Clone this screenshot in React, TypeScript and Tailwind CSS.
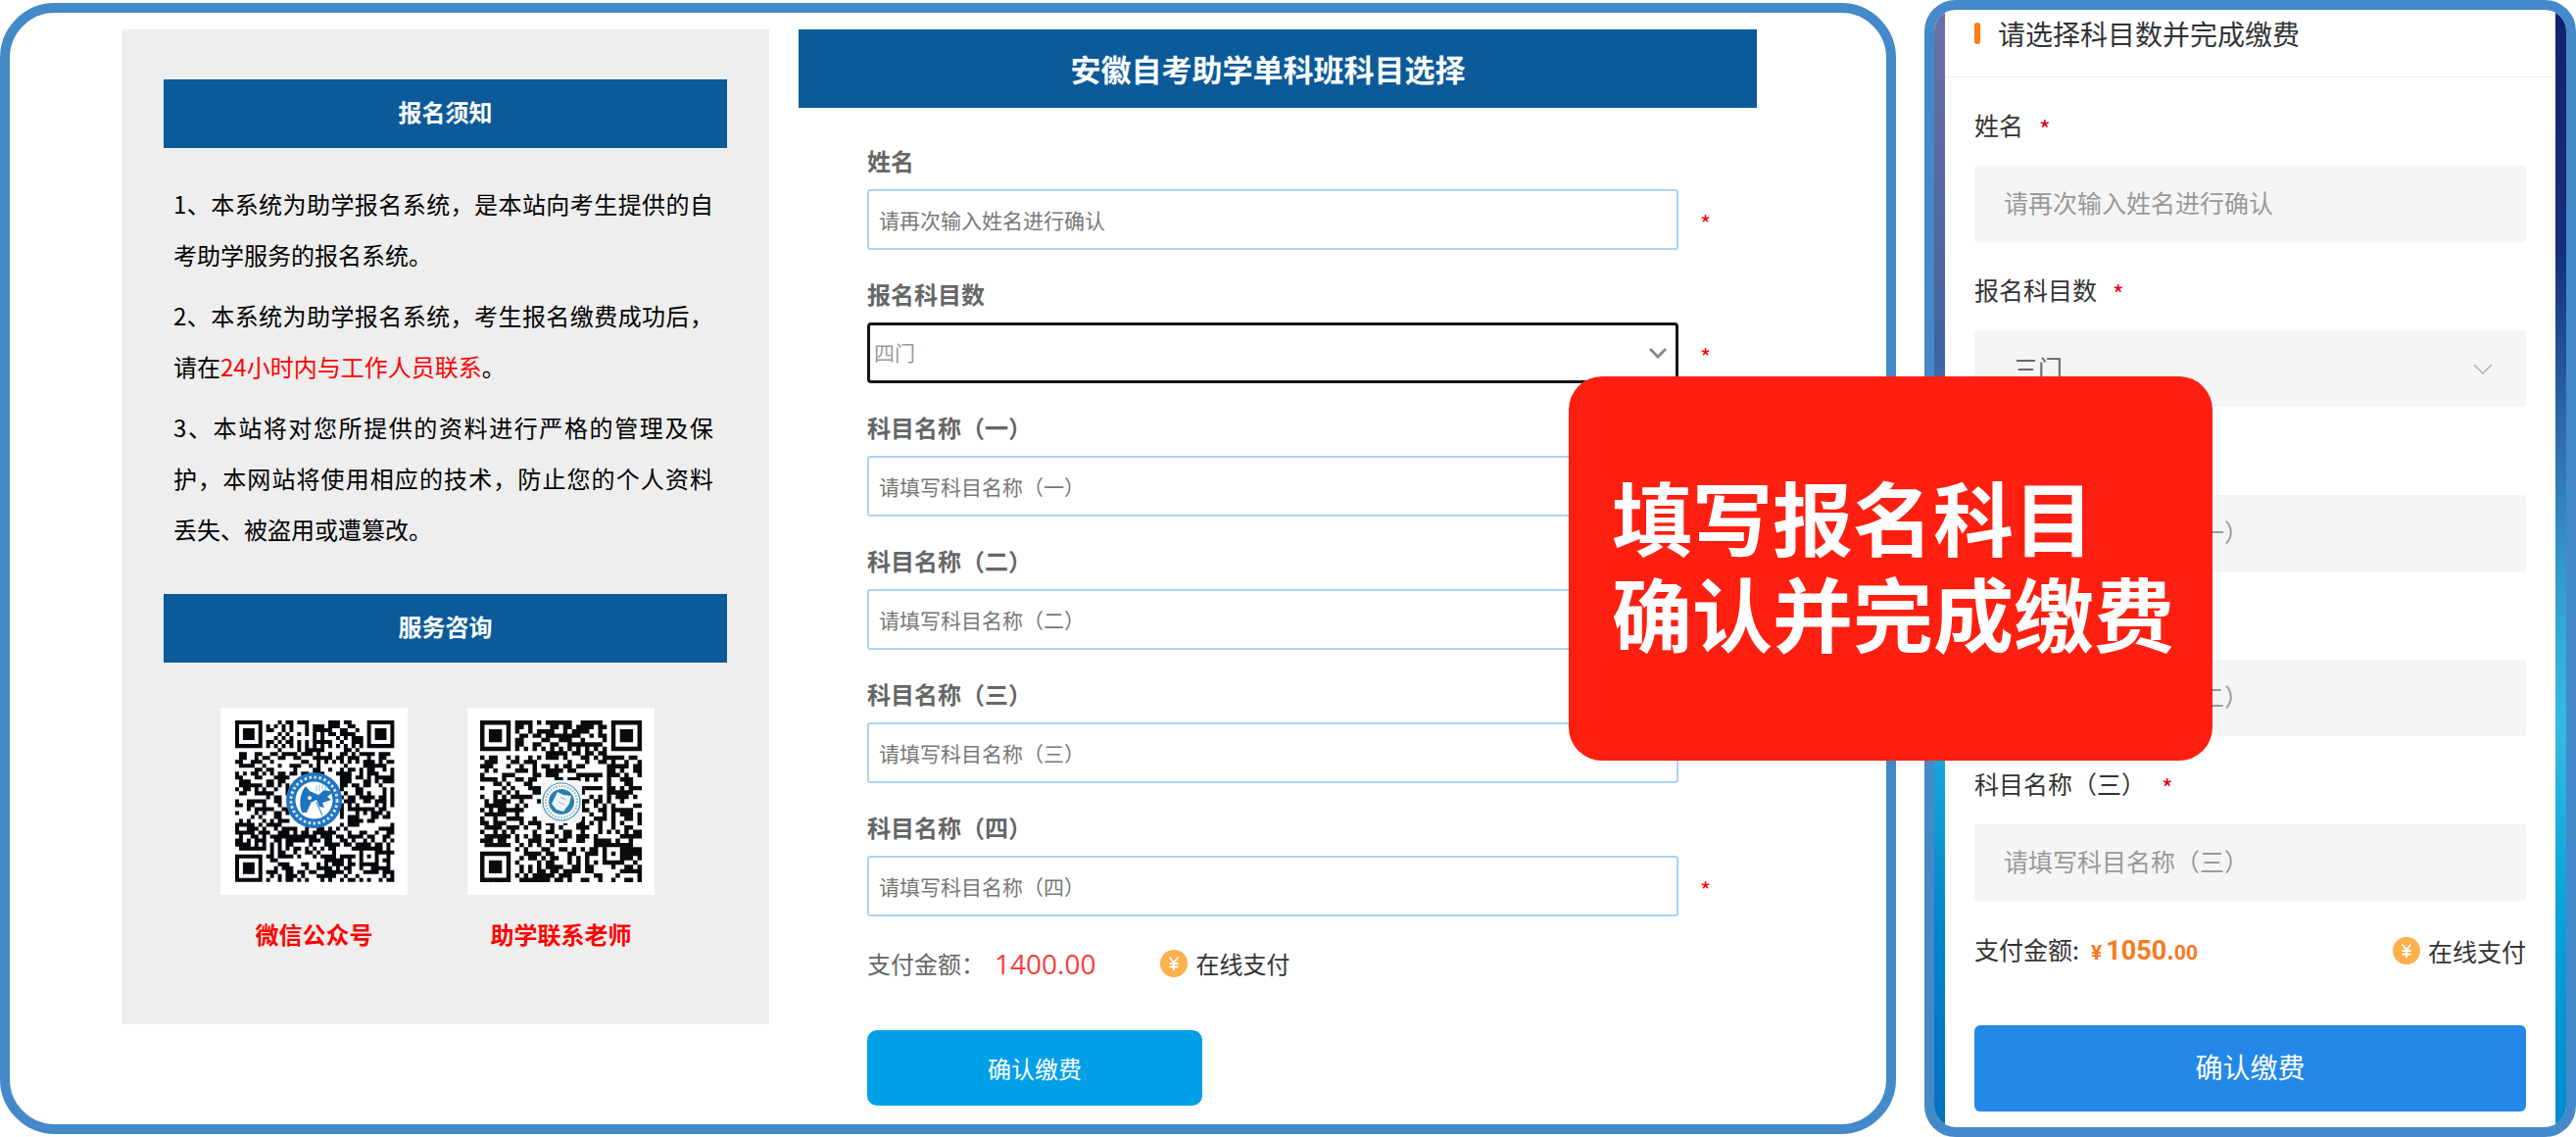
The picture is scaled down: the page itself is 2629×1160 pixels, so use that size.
import { useState } from "react";
import type { ReactNode } from "react";

const notices: ReactNode[] = [
  "1、本系统为助学报名系统，是本站向考生提供的自考助学服务的报名系统。",
  <>
    2、本系统为助学报名系统，考生报名缴费成功后，请在
    <span className="text-[#ff0000]">24小时内与工作人员联系</span>。
  </>,
  "3、本站将对您所提供的资料进行严格的管理及保护，本网站将使用相应的技术，防止您的个人资料丢失、被盗用或遭篡改。",
];

const counts = ["一门", "二门", "三门", "四门"];
const numerals = ["一", "二", "三", "四"];

// Dark modules of a QR symbol as one path, finders and alignment mark included
const qrPath = (size: number, seed: number, hole: number) => {
  let state = seed;
  const random = () => {
    state = (state * 1103515245 + 12345) % 2147483648;
    return state / 2147483648;
  };
  const corners = [
    [0, 0],
    [size - 7, 0],
    [0, size - 7],
  ];
  const mark = size - 7;
  const mid = (size - 1) / 2;
  let d = "";

  for (let y = 0; y < size; y++) {
    for (let x = 0; x < size; x++) {
      let dark = random() > 0.48;
      if (x === 6) dark = y % 2 === 0;
      if (y === 6) dark = x % 2 === 0;
      const ring = Math.max(Math.abs(x - mark), Math.abs(y - mark));
      if (ring <= 2) dark = ring !== 1;
      for (const [cx, cy] of corners) {
        const r = Math.max(Math.abs(x - cx - 3), Math.abs(y - cy - 3));
        if (r <= 4) dark = r === 3 || r <= 1;
      }
      if (Math.abs(x - mid) <= hole && Math.abs(y - mid) <= hole) dark = false;
      if (dark) d += `M${x} ${y}h1v1h-1z`;
    }
  }
  return d;
};

const wechatCode = qrPath(41, 20231, 6);
const teacherCode = qrPath(37, 7719, 4);

const WechatQr = () => (
  <svg viewBox="0 0 191 191" className="w-full bg-white" role="img" aria-label="微信公众号">
    <g transform="translate(15 13) scale(3.96 4.02)">
      <path d={wechatCode} fill="#05080d" />
    </g>
    <circle cx="95.5" cy="94.5" r="28.5" fill="#1f74c0" />
    <circle
      cx="95.5"
      cy="94.5"
      r="23.5"
      fill="none"
      stroke="#cfe3f5"
      strokeWidth="3"
      strokeDasharray="2.6 2.4"
    />
    <circle cx="95.5" cy="94.5" r="19" fill="#fff" />
    <path
      d="M83 107c-3-9-2-20 4-27l4 5 9 4 6-5 9 2-6 5 4 3-9 3 2 5-5-1-4-4-6 3-3 7z"
      fill="#1f74c0"
    />
    <path d="M92 97l6-3 2 4 4 14-8 1-5-5z" fill="#fff" />
    <path d="M98 96l6 14" stroke="#1f74c0" strokeWidth="1" />
    <path
      d="M98 85v-5M101 85v-6M104 84v-5M107 84v-4"
      stroke="#8bbbe2"
      strokeWidth="1"
      strokeLinecap="round"
    />
    <circle cx="91" cy="92" r="2" fill="#fff" />
  </svg>
);

const TeacherQr = () => (
  <svg viewBox="0 0 191 191" className="w-full bg-white" role="img" aria-label="助学联系老师">
    <g transform="translate(13 13) scale(4.46)">
      <path d={teacherCode} fill="#0c0c0c" />
    </g>
    <rect x="75" y="74" width="42" height="44" rx="5" fill="#f3f4f4" />
    <circle cx="96" cy="96" r="19" fill="#fff" stroke="#4c93b5" strokeWidth="1.2" />
    <circle
      cx="96"
      cy="96"
      r="16"
      fill="none"
      stroke="#8fbccf"
      strokeWidth="2.4"
      strokeDasharray="1.6 1.4"
    />
    <circle cx="96" cy="96" r="13" fill="#2a7fae" />
    <path d="M86 98l6-12 6 3 8 1-2 8-6 8-7-2z" fill="#eef5f8" />
    <path d="M95 91l5 3M93 96l6 3" stroke="#9aa9b5" strokeWidth="1" />
  </svg>
);

const YenIcon = () => (
  <svg viewBox="0 0 28 28" className="size-7 shrink-0" aria-hidden="true">
    <circle cx="14" cy="14" r="14" fill="#fdb04e" />
    <path
      d="M9.5 7.5L14 13l4.5-5.5M14 13v8M9.5 14h9M9.5 17.5h9"
      fill="none"
      stroke="#fff"
      strokeWidth="1.8"
    />
  </svg>
);

type FieldProps = {
  id: string;
  label: string;
  placeholder?: string;
};

type SelectFieldProps = FieldProps & {
  value: string;
  onChange: (value: string) => void;
};

const deskLabel = "mb-[11px] block text-2xl leading-9 font-bold text-[#666]";
const deskStar = "ml-[22px] w-[17px] pt-2 text-2xl leading-6 text-[#ff0000]";

const DeskField = ({ id, label, placeholder }: FieldProps) => (
  <div>
    <label htmlFor={id} className={deskLabel}>
      {label}
    </label>
    <div className="flex items-center">
      <input
        id={id}
        type="text"
        placeholder={placeholder}
        className="h-[62px] min-w-0 flex-1 rounded-[3px] border-2 border-[#a9d3f8] px-2.5 text-[21px] text-[#666] placeholder:text-[#777]"
      />
      <span className={deskStar}>*</span>
    </div>
  </div>
);

const DeskSelect = ({ id, label, value, onChange }: SelectFieldProps) => (
  <div>
    <label htmlFor={id} className={deskLabel}>
      {label}
    </label>
    <div className="flex items-center">
      <div className="relative min-w-0 flex-1">
        <select
          id={id}
          value={value}
          onChange={(e) => onChange(e.target.value)}
          className="block h-[62px] w-full appearance-none rounded-[4px] border-3 border-[#151515] bg-white px-1 text-[21px] text-[#999]"
        >
          {counts.map((count) => (
            <option key={count}>{count}</option>
          ))}
        </select>
        <svg
          viewBox="0 0 18 11"
          className="pointer-events-none absolute top-[26px] right-3 w-[18px]"
          aria-hidden="true"
        >
          <path d="M1 1l8 8 8-8" fill="none" stroke="#858585" strokeWidth="2.8" />
        </svg>
      </div>
      <span className={deskStar}>*</span>
    </div>
  </div>
);

const MobileLabel = ({ id, label }: FieldProps) => (
  <label
    htmlFor={id}
    className="mb-6 flex h-9 gap-4 text-[25px] leading-9 text-[#333]"
  >
    {label}
    <span className="pt-1 text-[#e60012]">*</span>
  </label>
);

const MobileField = ({ id, label, placeholder }: FieldProps) => (
  <div>
    <MobileLabel id={id} label={label} />
    <input
      id={id}
      type="text"
      placeholder={placeholder}
      className="block h-[78px] w-full rounded-[3px] bg-[#f5f5f5] px-[30px] pb-1 text-[25px] text-[#666] placeholder:text-[#999]"
    />
  </div>
);

const MobileSelect = ({ id, label, value, onChange }: SelectFieldProps) => (
  <div>
    <MobileLabel id={id} label={label} />
    <div className="relative">
      <select
        id={id}
        value={value}
        onChange={(e) => onChange(e.target.value)}
        className="block h-[78px] w-full appearance-none rounded-[3px] bg-[#f5f5f5] px-10 text-[25px] text-[#666]"
      >
        {counts.map((count) => (
          <option key={count}>{count}</option>
        ))}
      </select>
      <svg
        viewBox="0 0 20 11"
        className="pointer-events-none absolute top-[34px] right-[34px] w-5"
        aria-hidden="true"
      >
        <path d="M1 1l9 9 9-9" fill="none" stroke="#b0b0b0" strokeWidth="1.5" />
      </svg>
    </div>
  </div>
);

const SideHeading = ({ children }: { children: ReactNode }) => (
  <h2 className="bg-[#0b5a99] pt-[15px] pb-[19px] text-center text-2xl leading-9 font-bold text-white">
    {children}
  </h2>
);

const Sidebar = () => (
  <aside className="self-start bg-[#eee] px-[43px] pt-[51px] pb-[74px]">
    <SideHeading>报名须知</SideHeading>
    <div className="mt-[31px] mb-10 space-y-2.5 pr-[14px] pl-2.5 text-justify text-2xl leading-[52px] text-black">
      {notices.map((notice, index) => (
        <p key={index}>{notice}</p>
      ))}
    </div>
    <SideHeading>服务咨询</SideHeading>
    <div className="mt-[46px] flex justify-center gap-[61px] pr-4 text-center text-2xl leading-9 font-bold text-[#ff0000]">
      <div className="w-[191px]">
        <WechatQr />
        <p className="mt-[22px]">微信公众号</p>
      </div>
      <div className="w-[191px]">
        <TeacherQr />
        <p className="mt-[22px]">助学联系老师</p>
      </div>
    </div>
  </aside>
);

const DesktopPanel = () => {
  const [count, setCount] = useState<string>("四门");

  return (
    <section className="my-[3px] grid grid-cols-[661fr_978fr] gap-[30px] rounded-[56px] border-10 border-[#4489ca] bg-white pt-[17px] pr-[132px] pb-[19px] pl-[114px]">
      <Sidebar />
      <div>
        <h1 className="bg-[#0b5a99] py-5 pr-5 text-center text-[31px] leading-10 font-bold text-white">
          安徽自考助学单科班科目选择
        </h1>
        <form className="pt-9 pr-[41px] pl-[70px]">
          <div className="space-y-[27px]">
            <DeskField id="name" label="姓名" placeholder="请再次输入姓名进行确认" />
            <DeskSelect id="count" label="报名科目数" value={count} onChange={setCount} />
            {numerals.map((n, index) => (
              <DeskField
                key={n}
                id={`subject-${index}`}
                label={`科目名称（${n}）`}
                placeholder={`请填写科目名称（${n}）`}
              />
            ))}
          </div>
          <div className="mt-[30px] flex items-center text-2xl leading-9 text-[#666]">
            <span>支付金额：</span>
            <span className="ml-2.5 font-['Open_Sans'] text-[28px] text-[#f83c3c]">
              1400.00
            </span>
            <span className="ml-[66px] flex items-center gap-2 text-[#333]">
              <YenIcon />
              在线支付
            </span>
          </div>
          <button
            type="button"
            className="mt-[50px] h-[77px] w-[342px] rounded-[10px] bg-[#00a0e9] text-2xl text-white"
          >
            确认缴费
          </button>
        </form>
      </div>
    </section>
  );
};

const MobilePanel = () => {
  const [count, setCount] = useState<string>("三门");

  return (
    <section className="grid grid-cols-[11px_1fr_11px] overflow-hidden rounded-[32px] border-10 border-[#4489ca] bg-white">
      <div className="bg-[linear-gradient(to_bottom,#6c71a8_0%,#4262a2_30%,#2b86bb_50%,#16a6d6_67%,#0083c9_84%,#0072c0_100%)]" />
      <div>
        <div className="flex items-center gap-[18px] border-b border-[#eee] px-[30px] pt-1.5 pb-[26px]">
          <span className="h-[22px] w-1.5 rounded-full bg-[#ff7a10]" />
          <h2 className="text-[28px] leading-9 text-[#333]">请选择科目数并完成缴费</h2>
        </div>
        <form className="px-[30px] pt-[30px] pb-4">
          <div className="space-y-[30px]">
            <MobileField id="m-name" label="姓名" placeholder="请再次输入姓名进行确认" />
            <MobileSelect id="m-count" label="报名科目数" value={count} onChange={setCount} />
            {numerals.slice(0, 3).map((n, index) => (
              <MobileField
                key={n}
                id={`m-subject-${index}`}
                label={`科目名称（${n}）`}
                placeholder={`请填写科目名称（${n}）`}
              />
            ))}
          </div>
          <div className="mt-[33px] flex h-9 items-center justify-between text-[25px] leading-9 text-[#333]">
            <div className="flex items-baseline">
              支付金额:
              <span className="ml-3 font-[Roboto] text-[21px] font-bold text-[#f97a1c]">
                ¥<span className="ml-1 text-[27px]">1050.</span>00
              </span>
            </div>
            <span className="flex items-center gap-2">
              <YenIcon />
              在线支付
            </span>
          </div>
          <button
            type="button"
            className="mt-[58px] h-[88px] w-full rounded-md bg-[#2388e8] pb-1 text-[28px] text-white"
          >
            确认缴费
          </button>
        </form>
      </div>
      <div className="bg-[linear-gradient(to_bottom,#0f226f_0%,#16307e_22%,#2f6cac_38%,#33a0d0_52%,#34bbe2_64%,#09a3da_80%,#0089cc_100%)]" />
    </section>
  );
};

const App = () => {
  return (
    <main className="relative grid grid-cols-[1935fr_665fr] gap-[29px] bg-white font-['Noto_Sans_CJK_SC',sans-serif]">
      <DesktopPanel />
      <MobilePanel />
      {/* Step caption over both forms */}
      <div className="absolute top-[384px] left-[60.9%] w-[25%] rounded-[34px] bg-[#ff1f10] pt-[93px] pb-[103px] pl-11 text-[82px] leading-[98px] font-bold whitespace-nowrap text-white">
        <p>填写报名科目</p>
        <p>确认并完成缴费</p>
      </div>
    </main>
  );
};

export default App;
